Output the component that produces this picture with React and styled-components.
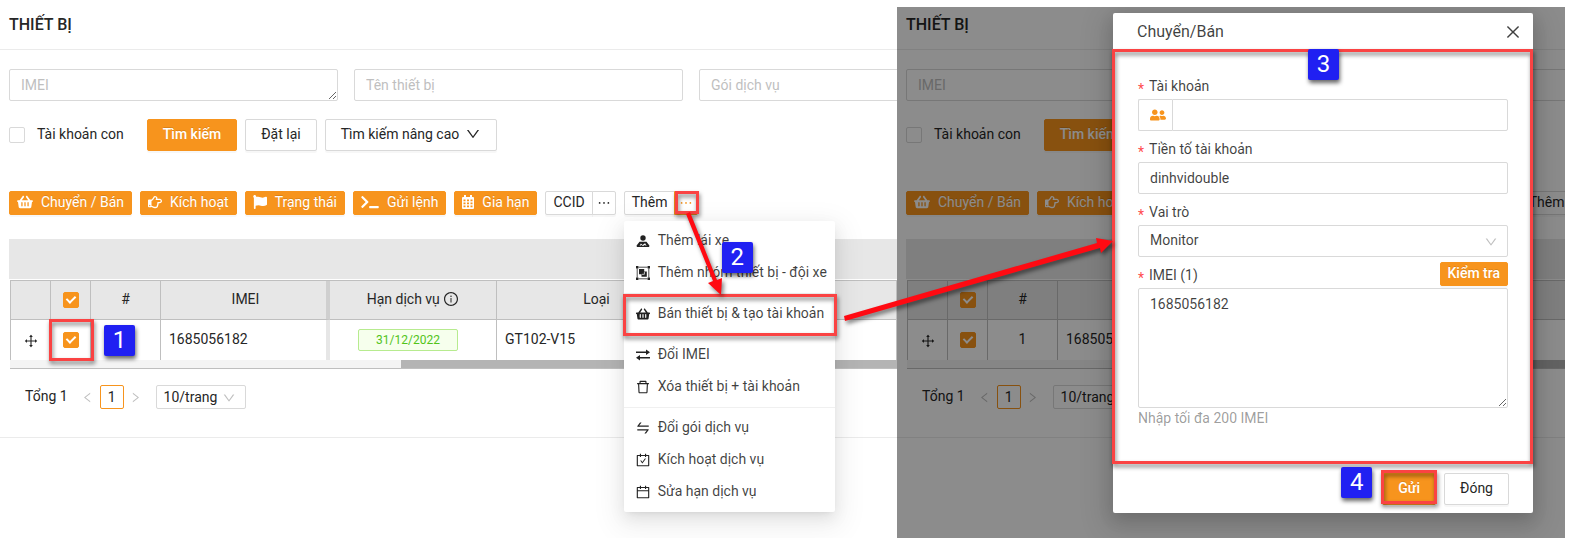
import React, { useId } from "react";
import styled, { createGlobalStyle, css } from "styled-components";
import {
  FaShoppingBasket,
  FaRegHandPointRight,
  FaFlag,
  FaTerminal,
  FaUserFriends,
} from "react-icons/fa";
import {
  AiOutlineDown,
  AiOutlineLeft,
  AiOutlineRight,
  AiOutlineEllipsis,
  AiOutlineInfoCircle,
  AiOutlineDrag,
  AiOutlineDelete,
  AiOutlineSwap,
  AiOutlineCarryOut,
  AiOutlineCalendar,
  AiOutlineClose,
} from "react-icons/ai";

const ORANGE = "#f7941d";
const LINE = "#d9d9d9";
const GRID = "#bfbfbf";
const RED = "#fa4343";

const GlobalStyle = createGlobalStyle`
  *, *::before, *::after { box-sizing: border-box; }
  body {
    margin: 0;
    background: #fff;
    color: #262626;
    font: 14px/22px Roboto, "Liberation Sans", sans-serif;
    font-variant-numeric: tabular-nums;
  }
  button, input, select, textarea { font: inherit; color: inherit; margin: 0; }
`;

const Shell = styled.div`
  position: relative;
  display: grid;
  grid-template-columns: 897fr 668fr;
  padding: 7px 7px 7px 0;
`;

const Panel = styled.section`
  position: relative;
  overflow: hidden;
  min-height: 531px;
  background: #fff;
`;

const PageHeader = styled.header`
  height: 43px;
  padding: 7px 9px;
  border-bottom: 1px solid #ebebeb;
`;

const PageTitle = styled.h1`
  margin: 0;
  font-size: 16px;
  line-height: 22px;
  font-weight: 500;
`;

const PageBody = styled.div`
  display: flex;
  flex-direction: column;
  padding: 19px 0 28px 9px;
  border-bottom: 1px solid #ebebeb;
`;

const Filters = styled.form`
  display: grid;
  grid-template-columns: repeat(3, 329px);
  gap: 16px;
`;

const fieldStyle = css`
  width: 100%;
  height: 32px;
  padding: 4px 11px;
  border: 1px solid ${LINE};
  border-radius: 2px;
  background: #fff;
  outline: none;
  &::placeholder { color: #bfbfbf; opacity: 1; }
`;

const TextField = styled.input`${fieldStyle}`;

const TextArea = styled.textarea`
  ${fieldStyle}
  display: block;
  height: ${(p) => (p.$tall ? "120px" : "32px")};
  resize: vertical;
  overflow: hidden;
`;

const SearchRow = styled.div`
  display: flex;
  align-items: center;
  gap: 8px;
  margin-top: 18px;
`;

const CheckLabel = styled.label`
  display: flex;
  align-items: center;
  gap: 12px;
  margin-right: 15px;
  span { padding-bottom: 2px; }
`;

const Checkbox = styled.input.attrs({ type: "checkbox" })`
  appearance: none;
  position: relative;
  flex: none;
  width: 16px;
  height: 16px;
  border: 1px solid ${LINE};
  border-radius: 2px;
  background: #fff;
  vertical-align: middle;
  &:checked { background: ${ORANGE}; border-color: ${ORANGE}; }
  &:checked::after {
    content: "";
    position: absolute;
    left: 4px;
    top: 1px;
    width: 6px;
    height: 9px;
    border: solid #fff;
    border-width: 0 2px 2px 0;
    transform: rotate(45deg);
  }
`;

const Button = styled.button`
  display: inline-flex;
  align-items: center;
  gap: ${(p) => (p.$small ? "8px" : "6px")};
  height: ${(p) => (p.$small ? "24px" : "32px")};
  padding: ${(p) => (p.$small ? "0 7px 2px" : "0 15px 2px")};
  border: 1px solid ${(p) => (p.$primary ? ORANGE : LINE)};
  border-radius: 2px;
  background: ${(p) => (p.$primary ? ORANGE : "#fff")};
  color: ${(p) => (p.$primary ? "#fff" : "#262626")};
  font-weight: ${(p) => (p.$strong ? 500 : 400)};
  text-shadow: ${(p) => (p.$primary ? "0 -1px 0 rgba(0,0,0,.12)" : "none")};
  box-shadow: 0 2px 0 rgba(0, 0, 0, 0.03);
  white-space: nowrap;
  svg {
    flex: none;
    width: ${(p) => p.$iconWidth || 16}px;
    height: ${(p) => (p.$iconWidth ? 14 : 16)}px;
  }
`;

const Actions = styled.div`
  display: flex;
  gap: 8px;
  margin-top: 40px;
`;

const SplitButton = styled.div`
  position: relative;
  display: flex;
  & > button:first-child { border-radius: 2px 0 0 2px; }
`;

const DotsButton = styled(Button)`
  width: 24px;
  margin-left: -1px;
  padding: 0;
  justify-content: center;
  border-radius: 0 2px 2px 0;
  color: ${(p) => (p.$active ? ORANGE : "#262626")};
  border-color: ${(p) => (p.$active ? ORANGE : LINE)};
`;

const TableWrap = styled.div`
  margin-top: 24px;
  overflow: hidden;
`;

const GroupHeader = styled.div`
  height: 40px;
  margin-bottom: 1px;
  background: #e7e7e7;
`;

const Table = styled.table`
  width: 887px;
  margin-left: 1px;
  table-layout: fixed;
  border-collapse: separate;
  border-spacing: 0;
  border-top: 1px solid ${GRID};
  border-left: 1px solid ${GRID};
  th, td { border-right: 1px solid ${GRID}; padding: 0 8px; }
  th {
    height: 39px;
    background: #e7e7e7;
    border-bottom: 1px solid ${GRID};
    font-weight: 400;
  }
  td { height: 40px; }
`;

const Th = styled.th`
  text-align: center;
  svg { vertical-align: -3px; }
  &&& {
    padding: 0 0 2px;
    ${(p) => p.$frozen && "padding-left: 4px; border-right: 4px solid #cfcfcf;"}
  }
`;

const Td = styled.td`
  position: relative;
  text-align: ${(p) => (p.$center ? "center" : "left")};
  svg { vertical-align: middle; }
  &&& {
    ${(p) => p.$frozen && "border-right: 4px solid #e6e6e6;"}
    ${(p) => p.$tag && "padding: 0 18px 0 8px;"}
  }
`;

const CellText = styled.div`
  padding-bottom: 2px;
`;

const DateTag = styled.span`
  display: block;
  width: 100px;
  height: 22px;
  margin: 0 auto;
  border: 1px solid #b7eb8f;
  border-radius: 2px;
  background: #f6ffed;
  color: #52c41a;
  font-size: 12px;
  line-height: 20px;
`;

const ScrollTrack = styled.div`
  height: 9px;
  margin-left: 1px;
  padding-left: 391px;
  border-bottom: 1px solid ${GRID};
  background: #f4f4f4;
`;

const ScrollThumb = styled.div`
  height: 8px;
  background: #b4b4b4;
`;

const Pagination = styled.nav`
  display: flex;
  align-items: center;
  margin-top: 16px;
  padding-left: 16px;
`;

const PageArrow = styled.button`
  display: flex;
  align-items: center;
  justify-content: center;
  width: 24px;
  height: 24px;
  padding: 0;
  border: 0;
  background: none;
  color: #bfbfbf;
`;

const Total = styled.span`
  padding-bottom: 2px;
  margin-right: 8px;
`;

const PageNumber = styled.button`
  width: 24px;
  height: 24px;
  padding: 0;
  border: 1px solid ${ORANGE};
  border-radius: 2px;
  background: #fff;
`;

const SelectBox = styled.div`
  position: relative;
  width: ${(p) => (p.$small ? "90px" : "100%")};
  margin-left: ${(p) => (p.$small ? "8px" : "0")};
  select {
    ${fieldStyle}
    display: block;
    appearance: none;
    height: ${(p) => (p.$small ? "24px" : "32px")};
    padding: ${(p) => (p.$small ? "0 7px 2px" : "0 11px 2px")};
  }
  svg {
    position: absolute;
    right: 10px;
    top: 50%;
    margin-top: -6px;
    color: #bfbfbf;
    pointer-events: none;
  }
`;

const Menu = styled.ul`
  position: absolute;
  z-index: 4;
  top: 30px;
  left: 0;
  width: 211px;
  margin: 0;
  padding: 4px 0;
  list-style: none;
  border-radius: 2px;
  background: #fff;
  box-shadow: 0 3px 6px -4px rgba(0, 0, 0, 0.12), 0 6px 16px rgba(0, 0, 0, 0.08),
    0 9px 28px 8px rgba(0, 0, 0, 0.06);
`;

const MenuGroup = styled.li`
  position: relative;
  ul { margin: 0; padding: 0; list-style: none; }
  & + & {
    margin-top: 4px;
    padding-top: 4px;
    border-top: 1px solid #f0f0f0;
  }
`;

const MenuItem = styled.button`
  display: flex;
  align-items: center;
  gap: 7px;
  width: 100%;
  height: 32px;
  padding: 0 11px;
  border: 0;
  background: none;
  color: rgba(0, 0, 0, 0.75);
  text-align: left;
  white-space: nowrap;
`;

const MenuIcon = styled.span`
  display: flex;
  align-items: center;
  justify-content: center;
  flex: none;
  width: 16px;
  height: 16px;
  color: #222;
`;

const MenuText = styled.span`
  padding-bottom: 2px;
`;

const Badge = styled.span`
  position: absolute;
  z-index: 6;
  ${(p) => p.$at};
  width: 31px;
  height: 31px;
  border-radius: 2px;
  background: #2020f2;
  color: #fff;
  font-size: 24px;
  line-height: 31px;
  text-align: center;
  box-shadow: 1px 3px 4px rgba(0, 0, 0, 0.6);
`;

const Frame = styled.span`
  position: absolute;
  z-index: 3;
  inset: ${(p) => p.$inset};
  border: 3px solid ${RED};
  filter: drop-shadow(1px 3px 2px rgba(0, 0, 0, 0.5));
  pointer-events: none;
`;

const Overlay = styled.div`
  position: absolute;
  inset: 0;
  display: flex;
  justify-content: flex-end;
  align-items: flex-start;
  padding: 6px 32px 0 0;
  background: rgba(0, 0, 0, 0.45);
`;

const Dialog = styled.div`
  width: 420px;
  border-radius: 2px;
  background: #fff;
  color: rgba(0, 0, 0, 0.75);
  box-shadow: 0 6px 16px rgba(0, 0, 0, 0.12), 0 9px 28px 8px rgba(0, 0, 0, 0.12);
`;

const DialogHeader = styled.header`
  display: flex;
  align-items: center;
  justify-content: space-between;
  height: 37px;
  padding: 0 11px 0 24px;
  h2 { margin: 0; font-size: 16px; font-weight: 400; }
`;

const CloseButton = styled.button`
  display: flex;
  padding: 0;
  border: 0;
  background: none;
`;

const DialogBody = styled.form`
  position: relative;
  height: 414px;
  padding: 25px 25px 0;
`;

const FieldHead = styled.div`
  display: flex;
  align-items: flex-end;
  justify-content: space-between;
  height: 24px;
  margin-top: ${(p) => (p.$first ? "0" : p.$tight ? "5px" : "7px")};
  margin-bottom: ${(p) => (p.$tight ? "2px" : "0")};
  label { padding-bottom: ${(p) => (p.$tight ? "0" : "2px")}; }
`;

const FieldLabel = styled.label`
  line-height: 22px;
  &::before {
    content: "*";
    display: inline-block;
    margin-right: 5px;
    line-height: 16px;
    vertical-align: -3px;
    color: #ff4d4f;
  }
`;

const InputGroup = styled.div`
  display: flex;
  input { border-radius: 0 2px 2px 0; }
`;

const Addon = styled.span`
  display: flex;
  align-items: center;
  justify-content: center;
  flex: none;
  width: 34px;
  height: 32px;
  padding-left: 4px;
  border: 1px solid ${LINE};
  border-right: 0;
  border-radius: 2px 0 0 2px;
  color: ${ORANGE};
`;

const Hint = styled.p`
  margin: 0;
  line-height: 20px;
  color: rgba(0, 0, 0, 0.4);
`;

const DialogFooter = styled.footer`
  display: flex;
  justify-content: flex-end;
  gap: 8px;
  padding: 9px 24px 8px;
`;

const FramedAction = styled.div`
  position: relative;
`;

const ArrowLayer = styled.svg`
  position: absolute;
  z-index: 5;
  left: 0;
  top: 0;
  pointer-events: none;
  filter: drop-shadow(2px 3px 2px rgba(0, 0, 0, 0.5));
`;

const CalendarGridIcon = () => (
  <svg viewBox="0 0 12 14" fill="currentColor" aria-hidden="true">
    <path
      fillRule="evenodd"
      d="M2 0h2v2h4V0h2v2h1a1 1 0 0 1 1 1v10a1 1 0 0 1-1 1H1a1 1 0 0 1-1-1V3a1 1 0 0 1 1-1h1zM1.500 4.500v1.700h2V4.500zM5 4.500v1.700h2V4.500zM8.500 4.500v1.700h2V4.500zM1.500 7.500v1.700h2V7.500zM5 7.500v1.700h2V7.500zM8.500 7.500v1.700h2V7.500zM1.500 10.500v1.700h2v-1.700zM5 10.500v1.700h2v-1.700zM8.500 10.500v1.700h2v-1.700z"
    />
  </svg>
);

const DriverIcon = ({ size }) => (
  <svg width={size} height={size} viewBox="0 0 14 14" fill="currentColor" aria-hidden="true">
    <circle cx="7" cy="4" r="2.700" />
    <path
      fillRule="evenodd"
      d="M3.500 7.800h7l2.700 3.400a1.200 1.200 0 0 1-1 1.900H1.800a1.200 1.200 0 0 1-1-1.900zM3.600 11.900l1.300-2.300 1.600 1.300 2.600-1.700 1.500 2.700-1.800-.900-1.800 1-1.600-.900z"
    />
  </svg>
);

const ExchangeIcon = ({ size }) => (
  <svg width={size} height={size} viewBox="0 0 14 14" fill="currentColor" aria-hidden="true">
    <path d="M0 3.400h10V1.500l4 2.700-4 2.700V5H0zM14 9H4V7.100L0 9.800l4 2.700v-1.900h10z" />
  </svg>
);

const GroupIcon = ({ size }) => (
  <svg width={size} height={size} viewBox="0 0 14 14" fill="currentColor" aria-hidden="true">
    <path d="M0 0h2.400v2.400H0zM11.600 0H14v2.400h-2.400zM0 11.600h2.400V14H0zM11.600 11.600H14V14h-2.400zM3 3h5.200v2.500h2.600v5.300H5.500V8.200H3z" />
    <path d="M2.400 1.200h9.200M2.400 12.800h9.200M1.200 2.400v9.200M12.800 2.400v9.200" stroke="currentColor" strokeWidth="0.800" />
    <path d="M5.900 8.300h2.500V5.900" fill="none" stroke="#fff" strokeWidth="0.700" />
  </svg>
);

const TOOLBAR = [
  ["Chuyển / Bán", FaShoppingBasket, 16],
  ["Kích hoạt", FaRegHandPointRight, 14],
  ["Trạng thái", FaFlag, 14],
  ["Gửi lệnh", FaTerminal, 18],
  ["Gia hạn", CalendarGridIcon, 12],
];

const MENU = [
  [["Thêm lái xe", DriverIcon, 14], ["Thêm nhóm thiết bị - đội xe", GroupIcon, 14]],
  [["Bán thiết bị & tạo tài khoản", FaShoppingBasket, 14]],
  [["Đổi IMEI", ExchangeIcon, 14], ["Xóa thiết bị + tài khoản", AiOutlineDelete, 16]],
  [
    ["Đổi gói dịch vụ", AiOutlineSwap, 16],
    ["Kích hoạt dịch vụ", AiOutlineCarryOut, 16],
    ["Sửa hạn dịch vụ", AiOutlineCalendar, 16],
  ],
];

function MoreMenu() {
  return (
    <Menu>
      {MENU.map((group, i) => (
        <MenuGroup key={i}>
          <ul>
            {group.map(([label, Icon, size]) => (
              <li key={label}>
                <MenuItem type="button">
                  <MenuIcon><Icon size={size} /></MenuIcon>
                  <MenuText>{label}</MenuText>
                </MenuItem>
              </li>
            ))}
          </ul>
          {i === 1 && <Frame $inset="0 -2px -6px -1px" />}
        </MenuGroup>
      ))}
      <Badge as="li" $at="top: 21px; left: 98px">2</Badge>
    </Menu>
  );
}

function DevicesPage({ annotated }) {
  const id = useId();
  return (
    <>
      <PageHeader>
        <PageTitle>THIẾT BỊ</PageTitle>
      </PageHeader>
      <PageBody>
        <Filters>
          <TextArea placeholder="IMEI" aria-label="IMEI" />
          <TextField placeholder="Tên thiết bị" aria-label="Tên thiết bị" />
          <TextField placeholder="Gói dịch vụ" aria-label="Gói dịch vụ" />
        </Filters>
        <SearchRow>
          <CheckLabel htmlFor={id}>
            <Checkbox id={id} />
            <span>Tài khoản con</span>
          </CheckLabel>
          <Button type="button" $primary $strong>Tìm kiếm</Button>
          <Button type="button">Đặt lại</Button>
          <Button type="button">
            Tìm kiếm nâng cao
            <AiOutlineDown />
          </Button>
        </SearchRow>
        <Actions>
          {TOOLBAR.map(([label, Icon, width]) => (
            <Button key={label} type="button" $primary $small $iconWidth={width}>
              <Icon />
              {label}
            </Button>
          ))}
          <SplitButton>
            <Button type="button" $small>CCID</Button>
            <DotsButton type="button" $small aria-label="CCID khác">
              <AiOutlineEllipsis />
            </DotsButton>
          </SplitButton>
          <SplitButton>
            <Button type="button" $small>Thêm</Button>
            <DotsButton type="button" $small $active={annotated} aria-label="Thêm khác">
              <AiOutlineEllipsis />
            </DotsButton>
            {annotated && <Frame $inset="0 -1px 1px 51px" />}
            {annotated && <MoreMenu />}
          </SplitButton>
        </Actions>
        <TableWrap>
          <GroupHeader />
          <Table>
            <colgroup>
              {[40, 40, 70, 169, 167, 200, 200].map((w, i) => (
                <col key={i} width={w} />
              ))}
            </colgroup>
            <thead>
              <tr>
                <Th />
                <Th><Checkbox defaultChecked aria-label="Chọn tất cả" /></Th>
                <Th>#</Th>
                <Th $frozen>IMEI</Th>
                <Th>Hạn dịch vụ <AiOutlineInfoCircle size={16} /></Th>
                <Th>Loại</Th>
                <Th />
              </tr>
            </thead>
            <tbody>
              <tr>
                <Td $center><AiOutlineDrag size={16} /></Td>
                <Td $center>
                  <CellText><Checkbox defaultChecked aria-label="Chọn thiết bị" /></CellText>
                  {annotated && <Frame $inset="-1px -4px -1px -2px" />}
                </Td>
                <Td $center>
                  {annotated ? (
                    <Badge $at="top: 5px; left: 13px">1</Badge>
                  ) : (
                    <CellText>1</CellText>
                  )}
                </Td>
                <Td $frozen><CellText>1685056182</CellText></Td>
                <Td $center $tag><DateTag>31/12/2022</DateTag></Td>
                <Td><CellText>GT102-V15</CellText></Td>
                <Td />
              </tr>
            </tbody>
          </Table>
          <ScrollTrack><ScrollThumb /></ScrollTrack>
        </TableWrap>
        <Pagination>
          <Total>Tổng 1</Total>
          <PageArrow type="button" aria-label="Trang trước"><AiOutlineLeft size={13} /></PageArrow>
          <PageNumber type="button">1</PageNumber>
          <PageArrow type="button" aria-label="Trang sau"><AiOutlineRight size={13} /></PageArrow>
          <SelectBox $small>
            <select aria-label="Số dòng mỗi trang"><option>10/trang</option></select>
            <AiOutlineDown size={14} />
          </SelectBox>
        </Pagination>
      </PageBody>
    </>
  );
}

function SellDialog() {
  return (
    <Overlay>
      <Dialog role="dialog" aria-labelledby="sell-title">
        <DialogHeader>
          <h2 id="sell-title">Chuyển/Bán</h2>
          <CloseButton type="button" aria-label="Đóng hộp thoại"><AiOutlineClose size={18} /></CloseButton>
        </DialogHeader>
        <DialogBody>
          <FieldHead $first>
            <FieldLabel htmlFor="account">Tài khoản</FieldLabel>
          </FieldHead>
          <InputGroup>
            <Addon><FaUserFriends size={16} /></Addon>
            <TextField id="account" />
          </InputGroup>
          <FieldHead>
            <FieldLabel htmlFor="prefix">Tiền tố tài khoản</FieldLabel>
          </FieldHead>
          <TextField id="prefix" defaultValue="dinhvidouble" />
          <FieldHead>
            <FieldLabel htmlFor="role">Vai trò</FieldLabel>
          </FieldHead>
          <SelectBox>
            <select id="role"><option>Monitor</option></select>
            <AiOutlineDown size={14} />
          </SelectBox>
          <FieldHead $tight>
            <FieldLabel htmlFor="imei-list">IMEI (1)</FieldLabel>
            <Button type="button" $primary $small $strong>Kiểm tra</Button>
          </FieldHead>
          <TextArea id="imei-list" $tall defaultValue="1685056182" />
          <Hint>Nhập tối đa 200 IMEI</Hint>
          <Frame $inset="-1px 0 0 -1px" />
          <Badge $at="top: -1px; left: 195px">3</Badge>
        </DialogBody>
        <DialogFooter>
          <FramedAction>
            <Button type="button" $primary $strong>Gửi</Button>
            <Frame $inset="-3px -1px 1px -1px" />
            <Badge $at="top: -6px; left: -41px">4</Badge>
          </FramedAction>
          <Button type="button">Đóng</Button>
        </DialogFooter>
      </Dialog>
    </Overlay>
  );
}

export default function App() {
  return (
    <Shell>
      <GlobalStyle />
      <Panel><DevicesPage annotated /></Panel>
      <Panel>
        <DevicesPage />
        <SellDialog />
      </Panel>
      <ArrowLayer width="1120" height="330" viewBox="0 0 1120 330" fill="#ff0a12" aria-hidden="true">
        <path d="M686 214l4-2 27 68 5-2-1 17-13-12 5-2z" />
        <path d="M844 316l253-73-1-5 17 3-12 12-1-5-255 73z" />
      </ArrowLayer>
    </Shell>
  );
}
